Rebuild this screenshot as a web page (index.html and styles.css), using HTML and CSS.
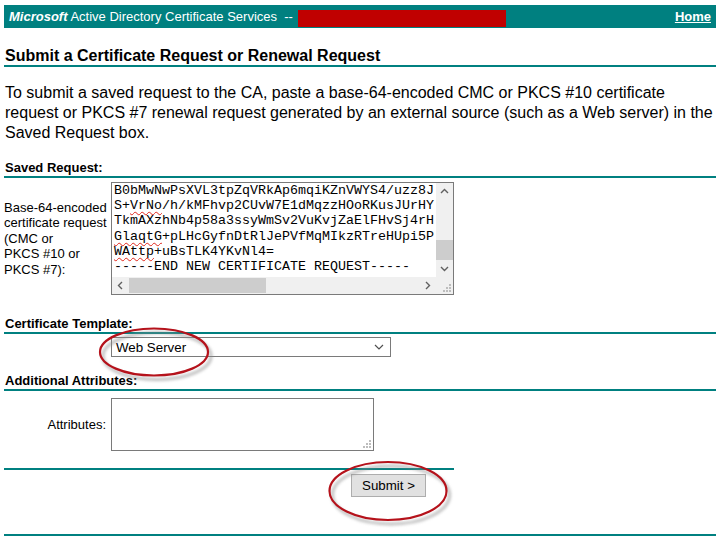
FILE: index.html
```html
<!DOCTYPE html>
<html>
<head>
<meta charset="utf-8">
<title>Microsoft Active Directory Certificate Services</title>
<link rel="stylesheet" href="styles.css">
</head>
<body>
<div class="page">
  <div class="topbar">
    <div class="brand"><b><i>Microsoft</i></b> Active Directory Certificate Services&nbsp;&nbsp;--&nbsp;<span class="redact"></span></div>
    <a class="home" href="#">Home</a>
  </div>

  <h1 class="title">Submit a Certificate Request or Renewal Request</h1>

  <p class="intro">To submit a saved request to the CA, paste a base-64-encoded CMC or PKCS #10 certificate request or PKCS #7 renewal request generated by an external source (such as a Web server) in the Saved Request box.</p>

  <h2 class="section">Saved Request:</h2>
  <div class="row row-req">
    <div class="label">Base-64-encoded<br>certificate request<br>(CMC or<br>PKCS #10 or<br>PKCS #7):</div>
    <div class="ta ta-req">
      <div class="ta-text"><div>B0bMwNwPsXVL3tpZqVRkAp6mqiKZnVWYS4/uzz8J</div><div>S+<span class="sp">VrNo</span>/h/kMFhvp2CUvW7E1dMqzzHOoRKusJUrHY</div><div>TkmAXzhNb4p58a3ssyWmSv2VuKvjZaElFHvSj4rH</div><div><span class="sp">GlaqtG</span>+pLHcGyfnDtRlJePVfMqMIkzRTreHUpi5P</div><div><span class="sp">WAttp</span>+uBsTLK4YKvNl4=</div><div>-----END NEW CERTIFICATE REQUEST-----</div></div>
      <div class="vbar">
        <div class="btn"><svg width="17" height="17" viewBox="0 0 17 17"><path d="M5 10 L8.5 6.5 L12 10" fill="none" stroke="#606060" stroke-width="1.4"/></svg></div>
        <div class="vtrack"><div class="vthumb"></div></div>
        <div class="btn"><svg width="17" height="17" viewBox="0 0 17 17"><path d="M5 7 L8.5 10.5 L12 7" fill="none" stroke="#606060" stroke-width="1.4"/></svg></div>
      </div>
      <div class="hbar">
        <div class="btn"><svg width="17" height="17" viewBox="0 0 17 17"><path d="M10 5 L6.5 8.5 L10 12" fill="none" stroke="#606060" stroke-width="1.4"/></svg></div>
        <div class="htrack"><div class="hthumb"></div></div>
        <div class="btn"><svg width="17" height="17" viewBox="0 0 17 17"><path d="M7 5 L10.5 8.5 L7 12" fill="none" stroke="#606060" stroke-width="1.4"/></svg></div>
      </div>
      <div class="corner"><svg width="17" height="17" viewBox="0 0 17 17"><g fill="#bdbdbd"><rect x="13" y="7" width="2" height="2"/><rect x="10" y="10" width="2" height="2"/><rect x="13" y="10" width="2" height="2"/><rect x="7" y="13" width="2" height="2"/><rect x="10" y="13" width="2" height="2"/><rect x="13" y="13" width="2" height="2"/></g></svg></div>
    </div>
  </div>

  <h2 class="section sec-template">Certificate Template:</h2>
  <div class="row row-select">
    <div class="label"></div>
    <div class="select">
      <span>Web Server</span>
      <svg width="10" height="6" viewBox="0 0 10 6"><path d="M1 1 L5 5 L9 1" fill="none" stroke="#505050" stroke-width="1.2"/></svg>
    </div>
  </div>

  <h2 class="section sec-attr">Additional Attributes:</h2>
  <div class="row row-attr">
    <div class="label label-attr">Attributes:</div>
    <div class="ta ta-attr">
      <svg class="grip" width="12" height="12" viewBox="0 0 12 12"><g fill="#bdbdbd"><rect x="9" y="3" width="2" height="2"/><rect x="6" y="6" width="2" height="2"/><rect x="9" y="6" width="2" height="2"/><rect x="3" y="9" width="2" height="2"/><rect x="6" y="9" width="2" height="2"/><rect x="9" y="9" width="2" height="2"/></g></svg>
    </div>
  </div>

  <div class="rule rule-short"></div>
  <div class="submit-row">
    <button class="submit" type="button">Submit &gt;</button>
  </div>
  <div class="rule rule-bottom"></div>

  <svg class="callout callout-select" width="140" height="70" viewBox="0 0 140 70">
    <defs><filter id="blur1" x="-20%" y="-20%" width="140%" height="140%"><feGaussianBlur stdDeviation="1.6"/></filter></defs>
    <ellipse cx="67" cy="36" rx="54" ry="23.5" fill="none" stroke="#8a8a8a" stroke-width="3" opacity="0.55" filter="url(#blur1)"/>
    <ellipse cx="64" cy="32" rx="54" ry="23.5" fill="none" stroke="#b5121b" stroke-width="2.2"/>
  </svg>
  <svg class="callout callout-submit" width="145" height="80" viewBox="0 0 145 80">
    <defs><filter id="blur2" x="-20%" y="-20%" width="140%" height="140%"><feGaussianBlur stdDeviation="1.6"/></filter></defs>
    <ellipse cx="72" cy="40" rx="58.5" ry="29" fill="none" stroke="#8a8a8a" stroke-width="3" opacity="0.55" filter="url(#blur2)"/>
    <ellipse cx="69" cy="36" rx="58.5" ry="29" fill="none" stroke="#b5121b" stroke-width="2.2"/>
  </svg>
</div>
</body>
</html>
```

FILE: styles.css
```css
html, body {
  margin: 0;
  padding: 0;
  background: #ffffff;
  overflow: hidden;
}

body {
  font-family: "Liberation Sans", Arial, sans-serif;
  color: #000000;
}

.page {
  position: relative;
  width: 712px;
  padding-left: 4px;
}

/* header bar */
.topbar {
  margin-top: 5px;
  height: 23px;
  background: #008080;
  color: #ffffff;
  display: flex;
  justify-content: space-between;
  align-items: flex-start;
  font-size: 13px;
  line-height: 23px;
  padding: 0 5px;
}

.brand {
  white-space: nowrap;
}

.redact {
  display: inline-block;
  width: 208px;
  height: 17px;
  background: #c00000;
  vertical-align: -6px;
  margin-left: 1px;
}

.home {
  color: #ffffff;
  font-weight: bold;
  text-decoration: underline;
}

/* title */
.title {
  margin: 19px 0 0 0;
  padding: 0 0 0 1px;
  font-size: 16px;
  line-height: 18px;
  font-weight: bold;
  border-bottom: 2px solid #008080;
}

.intro {
  margin: 16px 0 0 0;
  padding-left: 1px;
  font-size: 16px;
  line-height: 20px;
}

/* section headings */
.section {
  margin: 17px 0 0 0;
  padding: 0 0 1px 1px;
  font-size: 13px;
  line-height: 15px;
  font-weight: bold;
  border-bottom: 2px solid #008080;
}

.sec-template {
  margin-top: 21px;
}

.sec-attr {
  margin-top: 16px;
}

/* rows */
.row {
  display: flex;
  align-items: center;
}

.label {
  width: 107px;
  flex: none;
  font-size: 13px;
  line-height: 15.6px;
  white-space: nowrap;
}

.row-req {
  margin-top: 4px;
}

.row-select {
  margin-top: 3px;
}

.row-attr {
  margin-top: 7px;
}

.label-attr {
  text-align: right;
  padding-right: 5px;
  width: 102px;
}

/* textareas */
.ta {
  box-sizing: border-box;
  border: 1px solid #7a7a7a;
  background: #ffffff;
}

.ta-req {
  width: 343px;
  height: 113px;
  display: grid;
  grid-template-columns: 1fr 17px;
  grid-template-rows: 1fr 17px;
}

.ta-text {
  overflow: hidden;
  padding: 0 2px;
  font-family: "Liberation Mono", "Courier New", monospace;
  font-size: 13.33px;
  line-height: 15.2px;
  white-space: pre;
  color: #000000;
}

.sp {
  text-decoration: underline wavy #e0261b;
  text-decoration-thickness: 1px;
  text-underline-offset: 2px;
  text-decoration-skip-ink: none;
}

.vbar {
  display: flex;
  flex-direction: column;
  background: #f0f0f0;
}

.hbar {
  display: flex;
  background: #f0f0f0;
}

.btn {
  width: 17px;
  height: 17px;
  flex: none;
}

.btn svg,
.corner svg {
  display: block;
}

.vtrack {
  flex: 1;
  display: flex;
  flex-direction: column;
  justify-content: flex-end;
}

.vthumb {
  height: 20px;
  background: #cdcdcd;
}

.htrack {
  flex: 1;
  display: flex;
  padding: 1px 0;
}

.hthumb {
  width: 137px;
  background: #cdcdcd;
}

.corner {
  background: #f0f0f0;
}

.ta-attr {
  position: relative;
  width: 263px;
  height: 53px;
}

.grip {
  position: absolute;
  right: 1px;
  bottom: 1px;
}

/* select */
.select {
  box-sizing: border-box;
  width: 280px;
  height: 20px;
  border: 1px solid #7a7a7a;
  background: #ffffff;
  display: flex;
  align-items: center;
  justify-content: space-between;
  padding: 0 6px 0 4px;
  font-size: 13.33px;
}

/* rules & submit */
.rule {
  height: 2px;
  background: #008080;
}

.rule-short {
  width: 450px;
  margin-top: 17px;
}

.submit-row {
  width: 450px;
  display: flex;
  justify-content: flex-end;
  margin-top: 4px;
}

.submit {
  width: 75px;
  height: 23px;
  margin: 0 28px 0 0;
  padding: 0;
  border: 1px solid #adadad;
  background: #e1e1e1;
  font-family: "Liberation Sans", Arial, sans-serif;
  font-size: 13.33px;
  color: #000000;
}

.rule-bottom {
  margin-top: 37px;
}

/* red callout ellipses */
.callout {
  position: absolute;
  pointer-events: none;
}

.callout-select {
  left: 90px;
  top: 315px;
}

.callout-submit {
  left: 319px;
  top: 450px;
}
```
